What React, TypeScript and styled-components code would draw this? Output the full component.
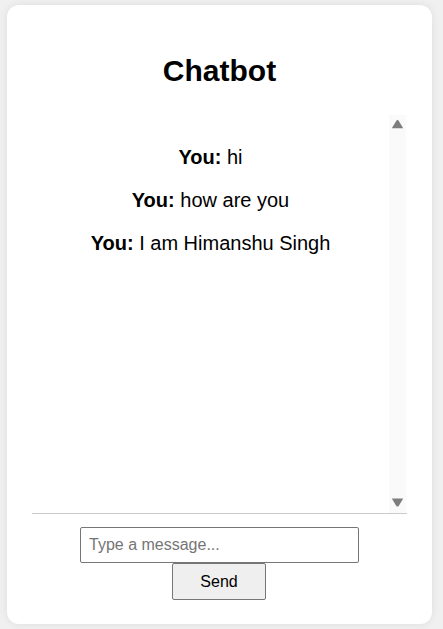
import React from "react";
import styled, { createGlobalStyle } from "styled-components";

const Global = createGlobalStyle`
  html, body { margin: 0; padding: 0; }
  body {
    background: #f0f0f0;
    font-family: "Liberation Sans", Arial, sans-serif;
  }
`;

const Page = styled.div`
  padding: 5px 11px 5px 7px;
`;

const Card = styled.div`
  box-sizing: border-box;
  height: 619px;
  background: #ffffff;
  border-radius: 12px;
  box-shadow: 0 0 8px rgba(0, 0, 0, 0.08);
  padding: 20px 25px 24px;
  display: flex;
  flex-direction: column;
`;

const Title = styled.h2`
  margin: 28px 0 27px;
  font-size: 30px;
  line-height: 35px;
  font-weight: bold;
  text-align: center;
  color: #000;
`;

const Messages = styled.div`
  box-sizing: border-box;
  height: 399px;
  display: flex;
  border-bottom: 1px solid #ccc;
`;

const MessageList = styled.div`
  flex: 1;
  min-width: 0;
  padding: 11px 10px 10px;
  overflow: hidden;
  text-align: center;
`;

const Message = styled.p`
  margin: 20px 0;
  font-size: 20px;
  line-height: 23px;
  color: #000;
`;

const ScrollTrack = styled.div`
  width: 17px;
  margin-right: 1px;
  background: #fafafa;
  display: flex;
  flex-direction: column;
  justify-content: space-between;
  align-items: center;
  padding: 4px 0 5px;
  box-sizing: border-box;
`;

const Arrow = styled.svg`
  display: block;
  width: 13px;
  height: 10px;
`;

const Composer = styled.div`
  display: flex;
  flex-direction: column;
  align-items: center;
  margin-top: 13px;
`;

const Input = styled.input`
  box-sizing: border-box;
  width: 279px;
  height: 36px;
  padding: 8px;
  font-family: "Liberation Sans", Arial, sans-serif;
  font-size: 16px;
  border: 1px solid #767676;
  border-radius: 2px;
  outline: none;
  &::placeholder { color: #757575; }
`;

const SendButton = styled.button`
  box-sizing: border-box;
  width: 94px;
  height: 37px;
  margin-left: -1px;
  font-family: "Liberation Sans", Arial, sans-serif;
  font-size: 16px;
  color: #000;
  background: #efefef;
  border: 1px solid #767676;
  border-radius: 2px;
  cursor: pointer;
`;

const messages = ["hi", "how are you", "I am Himanshu Singh"];

export default function App() {
  return (
    <>
      <Global />
      <Page>
        <Card>
          <Title>Chatbot</Title>
          <Messages>
            <MessageList>
              {messages.map((m, i) => (
                <Message key={i}>
                  <strong>You:</strong> {m}
                </Message>
              ))}
            </MessageList>
            <ScrollTrack>
              <Arrow viewBox="0 0 13 10">
                <path d="M6.5 1 Q5.8 1 5.3 1.7 L0.8 9.2 L12.2 9.2 L7.7 1.7 Q7.2 1 6.5 1 Z" fill="#7d7d7d" />
              </Arrow>
              <Arrow viewBox="0 0 13 10">
                <path d="M6.5 8.6 Q5.8 8.6 5.3 7.9 L0.8 0.6 L12.2 0.6 L7.7 7.9 Q7.2 8.6 6.5 8.6 Z" fill="#7d7d7d" />
              </Arrow>
            </ScrollTrack>
          </Messages>
          <Composer>
            <Input placeholder="Type a message..." />
            <SendButton>Send</SendButton>
          </Composer>
        </Card>
      </Page>
    </>
  );
}
